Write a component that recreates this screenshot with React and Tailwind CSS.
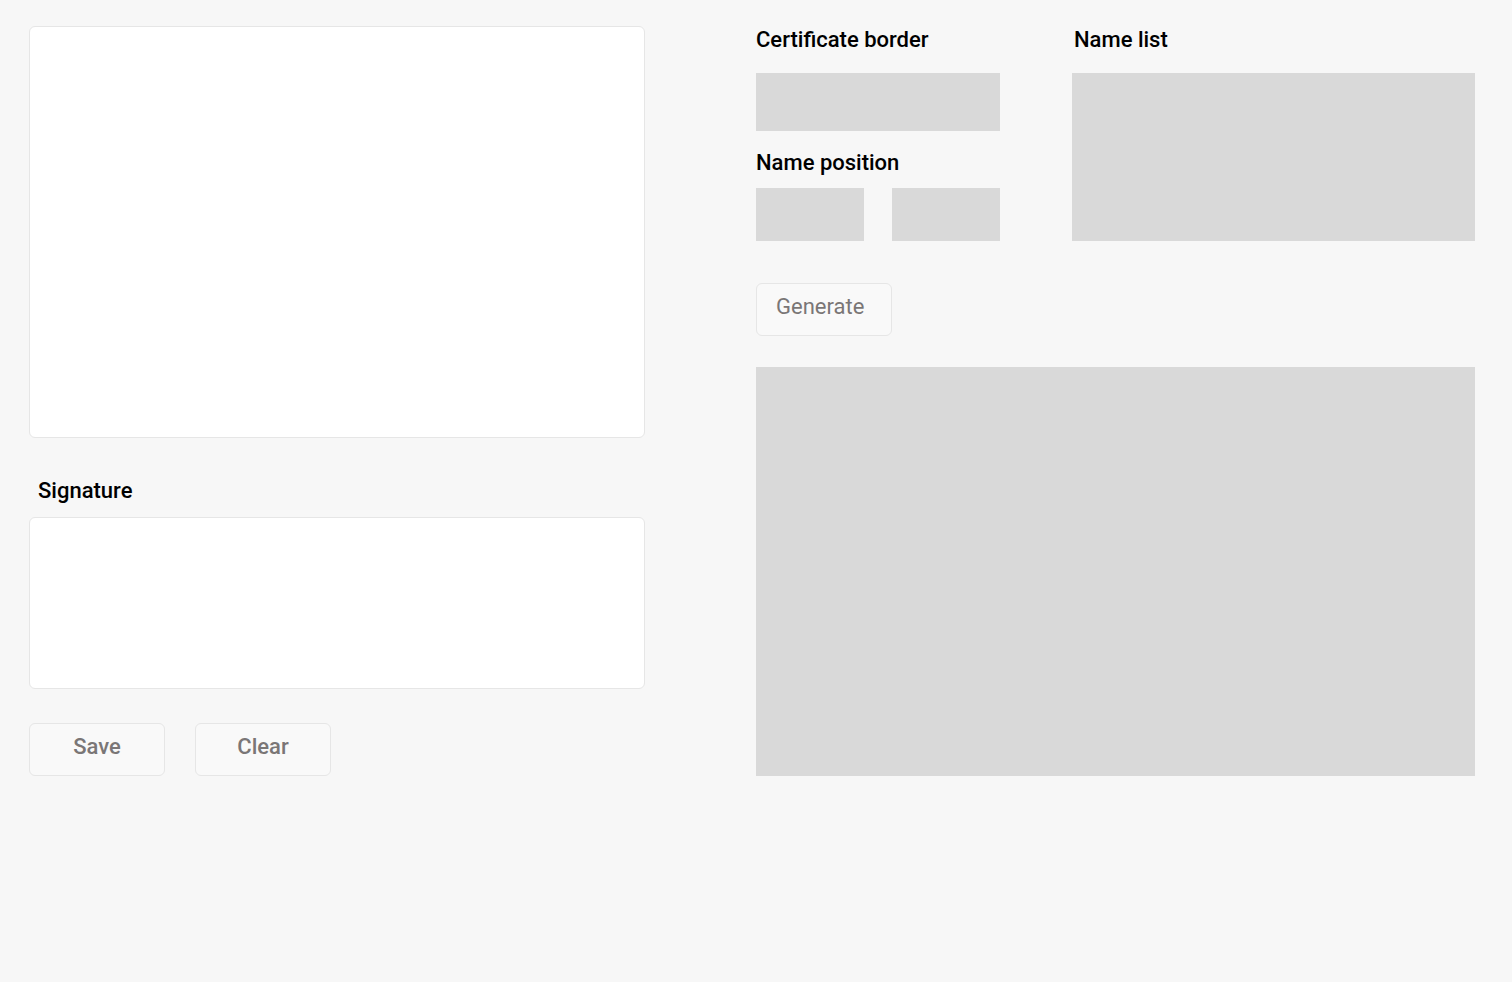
export default function App() {
  return (
    <div className="min-h-screen bg-[#f7f7f7] font-['Roboto',sans-serif] text-black">
      <div className="flex pl-[29px] pt-[26px] gap-[111px]">

        {/* Left column */}
        <div className="w-[616px] shrink-0 flex flex-col">
          <div className="h-[412px] bg-white border border-[#e6e6e6] rounded-[6px]" />

          <h2 className="mt-[40px] ml-[9px] text-[22px] leading-[26px] font-medium">Signature</h2>

          <div className="mt-[13px] h-[172px] bg-white border border-[#e6e6e6] rounded-[6px]" />

          <div className="mt-[34px] flex gap-[30px]">
            {['Save', 'Clear'].map(label => (
              <button
                key={label}
                className="w-[136px] h-[53px] pb-[6px] bg-[#f9f9f9] border border-[#e6e6e6] rounded-[6px] text-[22px] leading-[26px] font-medium text-[#7a7676]"
              >
                {label}
              </button>
            ))}
          </div>
        </div>

        {/* Right column */}
        <div className="w-[719px] shrink-0 flex flex-col">
          <div className="flex gap-[72px]">
            <div className="w-[244px] shrink-0">
              <h2 className="mt-[1px] text-[22px] leading-[26px] font-medium">Certificate border</h2>
              <div className="mt-[20px] h-[58px] bg-[#d9d9d9]" />
              <h2 className="mt-[19px] text-[22px] leading-[26px] font-medium">Name position</h2>
              <div className="mt-[12px] flex justify-between">
                <div className="w-[108px] h-[53px] bg-[#d9d9d9]" />
                <div className="w-[108px] h-[53px] bg-[#d9d9d9]" />
              </div>
            </div>

            <div className="flex-1">
              <h2 className="mt-[1px] ml-[2px] text-[22px] leading-[26px] font-medium">Name list</h2>
              <div className="mt-[20px] h-[168px] bg-[#d9d9d9]" />
            </div>
          </div>

          <button className="mt-[42px] w-[136px] h-[53px] pl-[19px] pb-[6px] text-left bg-[#f9f9f9] border border-[#e6e6e6] rounded-[6px] text-[22px] leading-[26px] text-[#7a7676]">
            Generate
          </button>

          <div className="mt-[31px] h-[409px] bg-[#d9d9d9]" />
        </div>

      </div>
    </div>
  );
}
